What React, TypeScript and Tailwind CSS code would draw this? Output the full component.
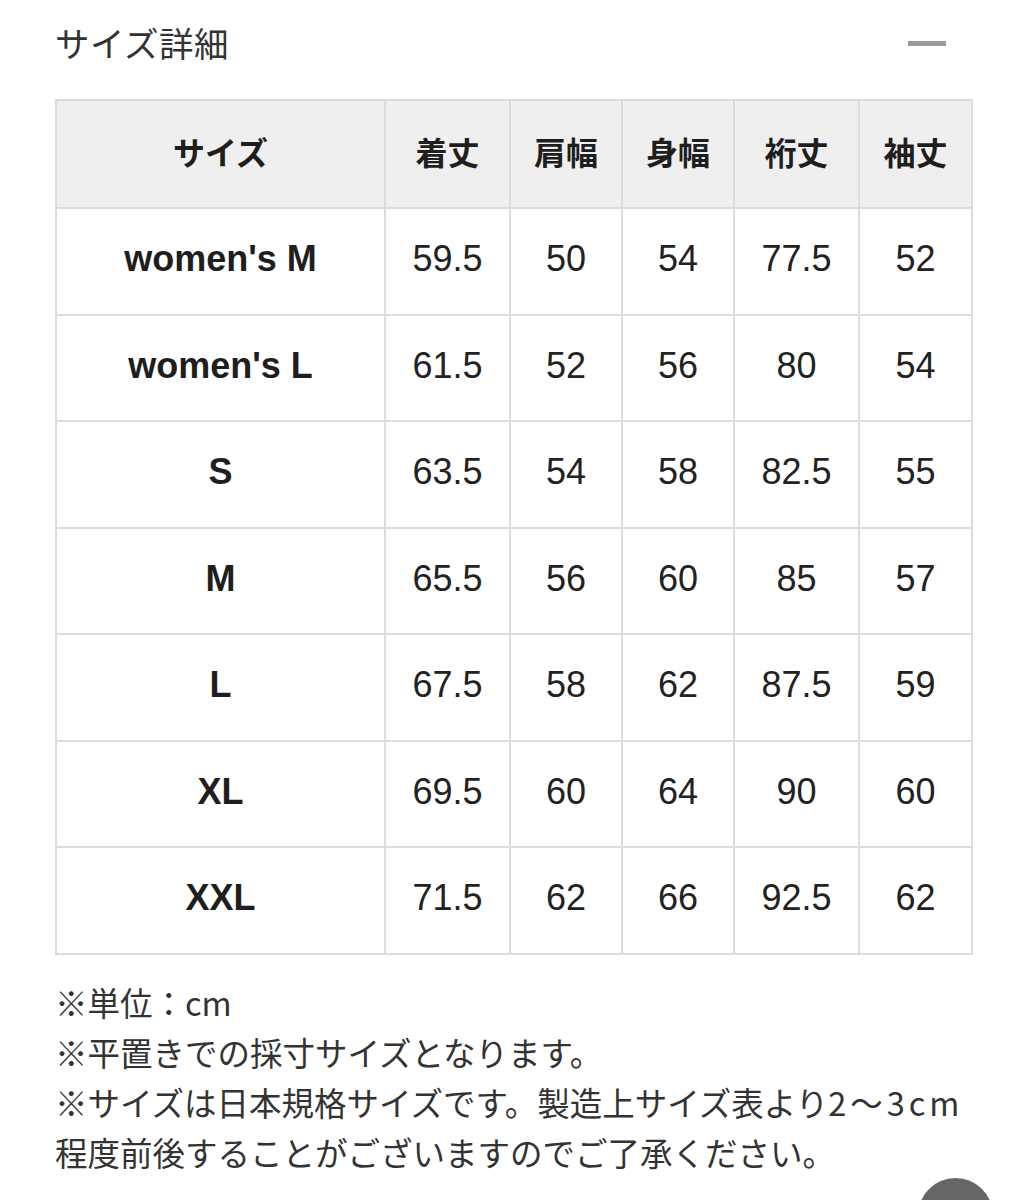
const headers = ["サイズ", "着丈", "肩幅", "身幅", "裄丈", "袖丈"];

const rows: [string, string, string, string, string, string][] = [
  ["women's M", "59.5", "50", "54", "77.5", "52"],
  ["women's L", "61.5", "52", "56", "80", "54"],
  ["S", "63.5", "54", "58", "82.5", "55"],
  ["M", "65.5", "56", "60", "85", "57"],
  ["L", "67.5", "58", "62", "87.5", "59"],
  ["XL", "69.5", "60", "64", "90", "60"],
  ["XXL", "71.5", "62", "66", "92.5", "62"],
];

export default function App() {
  return (
    <div className="relative min-h-[1200px] overflow-hidden bg-white px-[55px] font-['Liberation_Sans','Noto_Sans_CJK_JP',sans-serif]">
      {/* title bar */}
      <div className="flex h-[90px] items-center justify-between">
        <h2 className="mb-[4px] text-[34.5px] font-normal tracking-[0.5px] text-[#333] font-['Noto_Sans_CJK_JP',sans-serif]">
          サイズ詳細
        </h2>
        <span className="mb-[3px] mr-[26px] block h-[5px] w-[38px] bg-[#9a9a9a]" />
      </div>

      <table className="mt-[9px] w-[916px] table-fixed border-collapse border-2 border-[#dcdcdc] text-[#1e1e1e]">
        <colgroup>
          <col className="w-[329px]" />
          <col className="w-[125px]" />
          <col className="w-[112px]" />
          <col className="w-[112px]" />
          <col className="w-[125px]" />
          <col className="w-[113px]" />
        </colgroup>
        <thead>
          <tr className="h-[108px] bg-[#efefef]">
            {headers.map((h) => (
              <th
                key={h}
                className="border-2 border-[#dcdcdc] pb-[6px] text-center text-[32px] font-bold font-['Noto_Sans_CJK_JP',sans-serif]"
              >
                {h}
              </th>
            ))}
          </tr>
        </thead>
        <tbody>
          {rows.map((r) => (
            <tr key={r[0]} className="h-[106.5px]">
              {r.map((v, i) => (
                <td
                  key={i}
                  className={
                    i === 0
                      ? "border-2 border-[#dcdcdc] pb-[4px] text-center text-[36px] font-bold"
                      : "border-2 border-[#dcdcdc] pb-[4px] text-center text-[36px] font-normal text-[#222]"
                  }
                >
                  {v}
                </td>
              ))}
            </tr>
          ))}
        </tbody>
      </table>

      <div className="mt-[22px] text-[32.5px] leading-[50px] text-[#333] font-['Noto_Sans_CJK_JP',sans-serif]">
        <p className="whitespace-nowrap">※単位：cm</p>
        <p className="whitespace-nowrap">※平置きでの採寸サイズとなります。</p>
        <p className="whitespace-nowrap">
          ※サイズは日本規格サイズです。製造上サイズ表より
          <span className="tracking-[4px]">2〜3cm</span>
        </p>
        <p className="whitespace-nowrap">程度前後することがございますのでご了承ください。</p>
      </div>

      {/* floating button peeking at the bottom */}
      <div className="absolute left-[918px] top-[1178px] h-[75px] w-[75px] rounded-full bg-[#666]" />
    </div>
  );
}
